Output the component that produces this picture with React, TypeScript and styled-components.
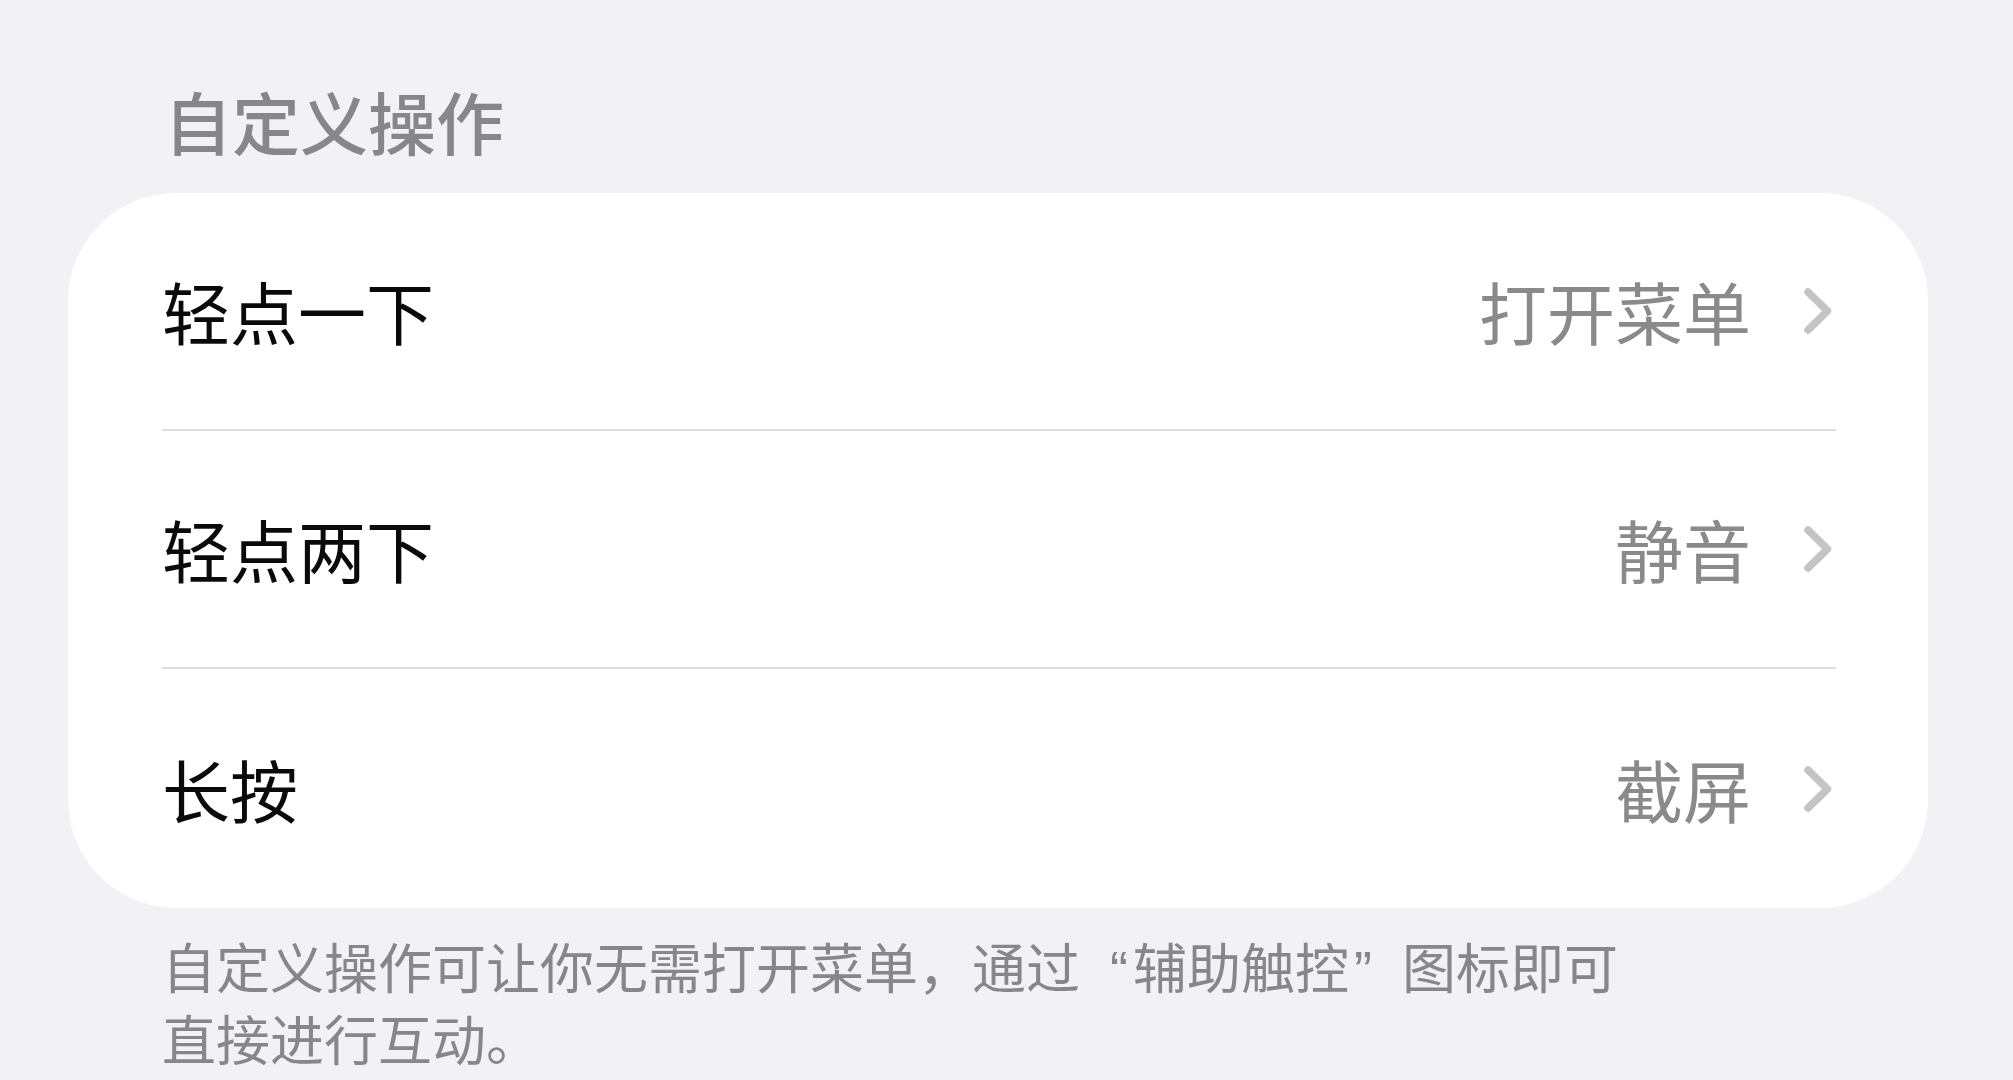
import React from "react";
import styled, { createGlobalStyle } from "styled-components";

const GlobalStyle = createGlobalStyle`
  html, body {
    margin: 0;
    padding: 0;
    background: #f1f1f6;
  }
  body {
    font-family: "Noto Sans CJK SC", "Noto Sans", sans-serif;
    -webkit-font-smoothing: antialiased;
  }
`;

const Page = styled.div`
  width: 2013px;
  height: 1080px;
  box-sizing: border-box;
  background: #f1f1f6;
  padding: 81px 85px 0 68px;
  display: flex;
  flex-direction: column;
  overflow: hidden;
`;

const SectionHeader = styled.h2`
  margin: 0 0 32px 96px;
  font-size: 68px;
  line-height: 80px;
  font-weight: 500;
  color: #86868b;
`;

const Card = styled.div`
  background: #ffffff;
  border-radius: 108px;
  display: flex;
  flex-direction: column;
`;

const Row = styled.div`
  padding: 0 92px 0 94px;
`;

const RowInner = styled.div<{ $last?: boolean }>`
  height: ${(p) => (p.$last ? 239 : 236)}px;
  display: flex;
  align-items: center;
  border-bottom: ${(p) => (p.$last ? "none" : "2px solid #dddde1")};
`;

const Title = styled.span`
  flex: 1;
  font-size: 68px;
  line-height: 80px;
  color: #0a0a0a;
  font-weight: 400;
`;

const Value = styled.span`
  font-size: 68px;
  line-height: 80px;
  color: #8a8a8e;
  font-weight: 400;
  margin-right: 52px;
`;

const Chevron = styled.svg`
  width: 29px;
  height: 48px;
  flex: none;
  margin-right: 4px;
`;

const Footer = styled.p`
  margin: 24px 0 0 94px;
  width: 1490px;
  font-size: 54px;
  line-height: 68px;
  color: #86868b;
  font-weight: 400;
`;

const Quote = styled.span<{ $open?: boolean }>`
  font-family: "Liberation Sans", "Noto Sans", sans-serif;
  padding-left: ${(p) => (p.$open ? "30px" : "5px")};
  padding-right: ${(p) => (p.$open ? "5px" : "30px")};
`;

const rows = [
  { title: "轻点一下", value: "打开菜单" },
  { title: "轻点两下", value: "静音" },
  { title: "长按", value: "截屏" },
];

export default function App() {
  return (
    <>
      <GlobalStyle />
      <Page>
        <SectionHeader>自定义操作</SectionHeader>
        <Card>
          {rows.map((r, i) => (
            <Row key={r.title}>
              <RowInner $last={i === rows.length - 1}>
                <Title>{r.title}</Title>
                <Value>{r.value}</Value>
                <Chevron viewBox="0 0 29 48" fill="none">
                  <path
                    d="M5 5 L24.5 24 L5 43"
                    stroke="#c4c4c7"
                    strokeWidth="7.5"
                    strokeLinecap="round"
                    strokeLinejoin="round"
                  />
                </Chevron>
              </RowInner>
            </Row>
          ))}
        </Card>
        <Footer>
          自定义操作可让你无需打开菜单，通过<Quote $open>“</Quote>辅助触控<Quote>”</Quote>图标即可直接进行互动。
        </Footer>
      </Page>
    </>
  );
}
